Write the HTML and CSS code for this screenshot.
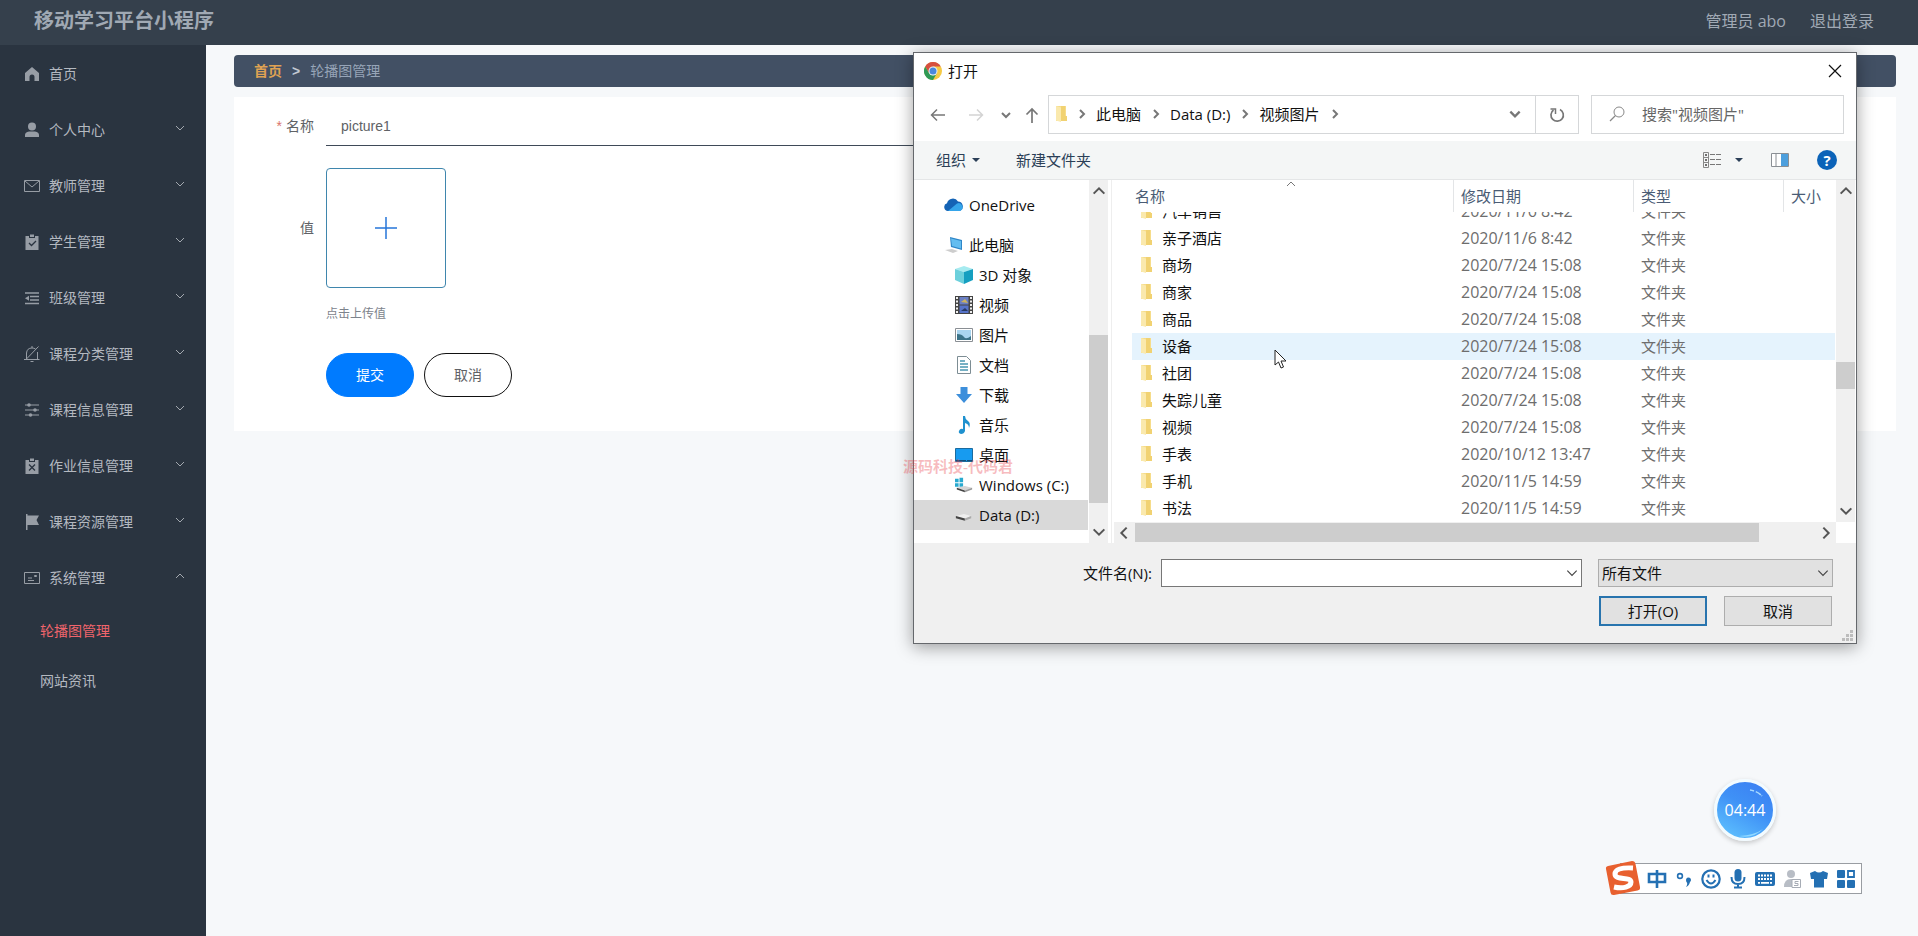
FILE: index.html
```html
<!DOCTYPE html>
<html lang="zh-CN">
<head>
<meta charset="utf-8">
<title>移动学习平台小程序</title>
<link rel="stylesheet" href="styles.css">
</head>
<body>
<svg class="sprite" aria-hidden="true">
  <symbol id="down" viewBox="0 0 12 12"><path d="M2 4l4 4 4-4" fill="none" stroke="currentColor"/></symbol>
  <symbol id="up" viewBox="0 0 12 12"><path d="M2 8l4-4 4 4" fill="none" stroke="currentColor"/></symbol>
  <symbol id="right" viewBox="0 0 12 12"><path d="M4 2l4 4-4 4" fill="none" stroke="currentColor"/></symbol>
  <symbol id="left" viewBox="0 0 12 12"><path d="M8 2L4 6l4 4" fill="none" stroke="currentColor"/></symbol>
  <symbol id="tri" viewBox="0 0 8 8"><path d="M0 2h8L4 6z" fill="currentColor"/></symbol>
  <symbol id="folder" viewBox="0 0 12 16"><path d="M1 0h10v15H1z" fill="#f6dc8a"/><path d="M6 0h4v10h2v5H6z" fill="#f1d272"/><path d="M1 0l5 1.500V16l-5-1.500z" fill="#fae9ad"/></symbol>
</svg>

<header class="topbar">
  <h1 class="brand">移动学习平台小程序</h1>
  <div class="account"><span>管理员 abo</span><a href="#">退出登录</a></div>
</header>

<div class="shell">
  <nav class="sidebar">
    <a class="menu-item" href="#"><svg class="menu-icon" viewBox="0 0 16 16"><path d="M8 1l7 6v8h-4.500v-4a2.500 2.500 0 0 0-5 0v4H1V7z" fill="currentColor"/></svg><span>首页</span></a>
    <a class="menu-item" href="#"><svg class="menu-icon" viewBox="0 0 16 16"><circle cx="8" cy="4.500" r="4" fill="currentColor"/><path d="M1 15v-2q0-3 4-3.500h6q4 .5 4 3.500v2z" fill="currentColor"/></svg><span>个人中心</span><svg class="menu-caret"><use href="#down"/></svg></a>
    <a class="menu-item" href="#"><svg class="menu-icon" viewBox="0 0 16 16"><path d="M.5 2.500h15v11H.5zM1 3l7 6 7-6" fill="none" stroke="currentColor"/></svg><span>教师管理</span><svg class="menu-caret"><use href="#down"/></svg></a>
    <a class="menu-item" href="#"><svg class="menu-icon" viewBox="0 0 16 16"><path d="M1.500 2H5v2h6V2h3.500v14h-13zM6 .5h4V3H6z" fill="currentColor"/><path d="M5 9l2.500 2.500L12 7" fill="none" stroke="#2a3440" stroke-width="1.300"/></svg><span>学生管理</span><svg class="menu-caret"><use href="#down"/></svg></a>
    <a class="menu-item" href="#"><svg class="menu-icon" viewBox="0 0 16 16"><path d="M1 3h14M6 6.500h9M6 10h9M1 13.500h14" stroke="currentColor" stroke-width="1.700"/><path d="M1 8.300l4-2.500v5z" fill="currentColor"/></svg><span>班级管理</span><svg class="menu-caret"><use href="#down"/></svg></a>
    <a class="menu-item" href="#"><svg class="menu-icon" viewBox="0 0 16 16"><path d="M0 13.500h15.500M2.500 13V7Q3 2 8 2q2 0 3.500 1M13.500 6v7M1.500 14L14.500.5M8 0v2M6.500 15.500h3" fill="none" stroke="currentColor"/></svg><span>课程分类管理</span><svg class="menu-caret"><use href="#down"/></svg></a>
    <a class="menu-item" href="#"><svg class="menu-icon" viewBox="0 0 16 16"><path d="M1 3h14M1 8h14M1 13h14" stroke="currentColor"/><g fill="currentColor"><circle cx="5" cy="3" r="1.800"/><circle cx="11" cy="8" r="1.800"/><circle cx="6.500" cy="13" r="1.800"/></g></svg><span>课程信息管理</span><svg class="menu-caret"><use href="#down"/></svg></a>
    <a class="menu-item" href="#"><svg class="menu-icon" viewBox="0 0 16 16"><path d="M1.500 2H5v2h6V2h3.500v14h-13zM6 .5h4V3H6z" fill="currentColor"/><path d="M5 6.500l6 6M11 6.500l-6 6" fill="none" stroke="#2a3440" stroke-width="1.300"/></svg><span>作业信息管理</span><svg class="menu-caret"><use href="#down"/></svg></a>
    <a class="menu-item" href="#"><svg class="menu-icon" viewBox="0 0 16 16"><path d="M2 0h1.500v1.500H15L12.500 6l2.500 5H3.500v5H2z" fill="currentColor"/></svg><span>课程资源管理</span><svg class="menu-caret"><use href="#down"/></svg></a>
    <a class="menu-item" href="#"><svg class="menu-icon" viewBox="0 0 16 16"><path d="M.5 2.500h15v11H.5zM4 8h4M4 10.500h6M10.500 5.500h2v1h-2z" fill="none" stroke="currentColor"/></svg><span>系统管理</span><svg class="menu-caret"><use href="#up"/></svg></a>
    <a class="submenu-item current" href="#">轮播图管理</a>
    <a class="submenu-item" href="#">网站资讯</a>
  </nav>

  <main class="content">
    <div class="breadcrumb"><a href="#">首页</a><span class="crumb-sep">&gt;</span><span>轮播图管理</span></div>
    <form class="card">
      <div class="field">
        <label class="field-label" for="name"><span class="required">*</span>名称</label>
        <input class="text-input" id="name" type="text" value="picture1">
      </div>
      <div class="field upload-field">
        <label class="field-label" for="upload">值</label>
        <button class="upload" id="upload" type="button" aria-label="上传"><svg viewBox="0 0 24 24" width="24" height="24"><path d="M12 1v22M1 12h22" stroke="#2676d9" stroke-width="1.500"/></svg></button>
      </div>
      <p class="hint">点击上传值</p>
      <div class="actions">
        <button class="btn primary" type="button">提交</button>
        <button class="btn" type="button">取消</button>
      </div>
    </form>
  </main>
</div>

<section class="dialog" role="dialog" aria-label="打开">
  <div class="titlebar">
    <svg width="18" height="18" viewBox="0 0 18 18"><circle cx="9" cy="9" r="9" fill="#f6ca45"/><path d="M1.200 4.500A9 9 0 0 1 16.800 4.500H9L5.100 11.300z" fill="#d7503f"/><path d="M1.200 4.500A9 9 0 0 0 9 18l3.900-6.800L9 13.500 5.100 11.300z" fill="#2f9a56"/><circle cx="9" cy="9" r="4.500" fill="#eef3f8"/><circle cx="9" cy="9" r="3.500" fill="#4a88dc"/></svg>
    <span class="window-title">打开</span>
    <button class="plain" type="button" aria-label="关闭"><svg width="14" height="14" viewBox="0 0 14 14"><path d="M1 1l12 12M13 1L1 13" stroke="#111" stroke-width="1.200"/></svg></button>
  </div>

  <div class="navbar">
    <div class="history">
      <button class="plain" type="button" aria-label="后退"><svg width="16" height="16" viewBox="0 0 16 16"><path d="M15 8H1.500M7 2.500L1.500 8 7 13.500" fill="none" stroke="#777" stroke-width="1.500"/></svg></button>
      <button class="plain" type="button" aria-label="前进"><svg width="16" height="16" viewBox="0 0 16 16"><path d="M1 8h13.500M9 2.500L14.500 8 9 13.500" fill="none" stroke="#d3d3d3" stroke-width="1.500"/></svg></button>
      <button class="plain heavy" type="button" aria-label="最近"><svg width="12" height="12"><use href="#down"/></svg></button>
      <button class="plain" type="button" aria-label="上移"><svg width="14" height="16" viewBox="0 0 14 16"><path d="M7 16V2M1.500 7.500L7 2l5.500 5.500" fill="none" stroke="#777" stroke-width="1.700"/></svg></button>
    </div>
    <div class="address">
      <svg width="12" height="16"><use href="#folder"/></svg>
      <svg class="heavy" width="12" height="12"><use href="#right"/></svg><span>此电脑</span>
      <svg class="heavy" width="12" height="12"><use href="#right"/></svg><span>Data (D:)</span>
      <svg class="heavy" width="12" height="12"><use href="#right"/></svg><span>视频图片</span>
      <svg class="heavy" width="12" height="12"><use href="#right"/></svg>
      <button class="plain heavy addr-drop" type="button" aria-label="历史"><svg width="14" height="14"><use href="#down"/></svg></button>
      <button class="plain refresh" type="button" aria-label="刷新"><svg width="16" height="16" viewBox="0 0 16 16"><path d="M11 2.500A6.200 6.200 0 1 1 4.500 3" fill="none" stroke="#777" stroke-width="1.700"/><path d="M1.500 2h5v5" fill="none" stroke="#777" stroke-width="1.500"/></svg></button>
    </div>
    <label class="search">
      <svg width="16" height="16" viewBox="0 0 16 16"><circle cx="10" cy="6" r="5" fill="none" stroke="#888"/><path d="M6.500 9.500L1 15" stroke="#888" stroke-width="1.300"/></svg>
      <input type="text" placeholder='搜索"视频图片"' aria-label="搜索">
    </label>
  </div>

  <div class="toolbar">
    <button class="plain organize" type="button">组织<svg width="8" height="8"><use href="#tri"/></svg></button>
    <button class="plain" type="button">新建文件夹</button>
    <div class="view-tools">
      <button class="plain views" type="button" aria-label="视图"><svg width="18" height="16" viewBox="0 0 18 16"><path d="M.5.5h5v15h-5zM.5 5.500h5M.5 10.500h5" fill="none" stroke="#888"/><path d="M2 3h2M2 8h2M2 13h2" stroke="#444" stroke-width="1.500"/><path d="M7 2.500h5M13 2.500h5M7 7.500h5M13 7.500h5M7 12.500h5M13 12.500h5" stroke="#777"/></svg><svg width="8" height="8"><use href="#tri"/></svg></button>
      <button class="plain" type="button" aria-label="预览窗格"><svg width="18" height="14" viewBox="0 0 18 14"><path d="M.5.500h17v13H.5zM5 .5v13" fill="#fff" stroke="#8a8f94"/><path d="M10 1h7v12h-7z" fill="#4c9fdd"/></svg></button>
      <button class="plain help" type="button" aria-label="帮助">?</button>
    </div>
  </div>

  <div class="browser">
    <ul class="tree">
      <li class="root drive"><svg width="20" height="20" viewBox="0 0 20 20"><path d="M4 16a4 4 0 0 1-1-7.800A6 6 0 0 1 14 6.500a5 5 0 0 1 2 9.500z" fill="#1463b5"/><path d="M4 16L13 8.500a4 4 0 0 1 3 7.500z" fill="#35a5ea"/></svg>OneDrive</li>
      <li class="root"><svg width="20" height="20" viewBox="0 0 20 20"><path d="M6 2l12 3v10L7 12z" fill="#2f86c8"/><path d="M7 3.500l10 2.500v7.500L8 11z" fill="#64bdf0"/><path d="M1 15l7-1 6 2-5 2z" fill="#cdcdcd"/></svg>此电脑</li>
      <li><svg width="18" height="18" viewBox="0 0 18 18"><path d="M9 0l9 3-9 3-9-3z" fill="#a6ebf0"/><path d="M0 3l9 3v12l-9-4z" fill="#6cd0dc"/><path d="M18 3L9 6v12l9-4z" fill="#159fc0"/></svg>3D 对象</li>
      <li><svg width="18" height="18" viewBox="0 0 18 18"><path d="M0 0h18v18H0z" fill="#444"/><path d="M4.500 1h9v7.500h-9z" fill="#6a7fc4"/><path d="M4.500 9.500h9V17h-9z" fill="#5673c9"/><path d="M6 6l4-3 3 4z" fill="#ccb25d"/><path d="M6 15l4-3 3 3z" fill="#273964"/><path d="M2 1v17M16 1v17" stroke="#eee" stroke-width="2" stroke-dasharray="2 1.500"/></svg>视频</li>
      <li><svg width="18" height="14" viewBox="0 0 18 14"><path d="M.5.500h17v13H.5z" fill="#fff" stroke="#8a8f94"/><path d="M2 2h14v10H2z" fill="#a9d5f0"/><path d="M2 6q5 0 7 3t7-1v4H2z" fill="#3b7389"/></svg>图片</li>
      <li><svg width="18" height="18" viewBox="0 0 18 18"><path d="M2.500.5h9l4 4v13h-13z" fill="#fff" stroke="#7d8d94"/><path d="M5 5h5M5 8h8M5 11h8M5 14h8" stroke="#4997b1" stroke-width="1.500"/></svg>文档</li>
      <li><svg width="18" height="18" viewBox="0 0 18 18"><path d="M5.500 1h7v7H17l-8 9-8-9h4.500z" fill="#3d8fdb"/></svg>下载</li>
      <li><svg width="18" height="18" viewBox="0 0 18 18"><path d="M8 0h2q0 3 3 5t1 7q0-4-4-5v8q-1 3-4 3-3-1-2-3 1-3 4-2z" fill="#1e91cf"/></svg>音乐</li>
      <li><svg width="18" height="14" viewBox="0 0 18 14"><path d="M.5.500h17v13H.5z" fill="#179bf0" stroke="#1b6b9f"/><path d="M1 12.500h16" stroke="#134f7a" stroke-dasharray="10 1"/></svg>桌面</li>
      <li><svg width="20" height="18" viewBox="0 0 20 18"><path d="M0 2h4v4H0zM5 1h4v5H5zM0 7h4v4H0zM5 7h4v4H5z" fill="#28a9cf"/><path d="M2 12l9-2 8 2-7 3z" fill="#d4d4d4"/><path d="M2 12l9 3v2l-9-3z" fill="#444"/><path d="M11 15l8-3v2l-8 3z" fill="#999"/></svg>Windows (C:)</li>
      <li class="selected"><svg width="20" height="18" viewBox="0 0 20 18"><path d="M1 10l9-2 8 2-7 3z" fill="#eee"/><path d="M1 10l10 3v2.500L1 12.500z" fill="#444"/><path d="M11 13l7-3v2.500l-7 3z" fill="#aaa"/></svg>Data (D:)</li>
    </ul>
    <div class="vscroll">
      <svg width="16" height="16"><use href="#up"/></svg>
      <div class="track"><div class="thumb tree-thumb"></div></div>
      <svg width="16" height="16"><use href="#down"/></svg>
    </div>
    <div class="files">
      <table class="file-table">
        <thead><tr><th>名称<svg class="sort" width="12" height="12"><use href="#up"/></svg></th><th>修改日期</th><th>类型</th><th>大小</th></tr></thead>
        <tbody>
          <tr><td><svg width="12" height="16"><use href="#folder"/></svg>汽车销售</td><td>2020/11/6 8:42</td><td>文件夹</td><td></td></tr>
          <tr><td><svg width="12" height="16"><use href="#folder"/></svg>亲子酒店</td><td>2020/11/6 8:42</td><td>文件夹</td><td></td></tr>
          <tr><td><svg width="12" height="16"><use href="#folder"/></svg>商场</td><td>2020/7/24 15:08</td><td>文件夹</td><td></td></tr>
          <tr><td><svg width="12" height="16"><use href="#folder"/></svg>商家</td><td>2020/7/24 15:08</td><td>文件夹</td><td></td></tr>
          <tr><td><svg width="12" height="16"><use href="#folder"/></svg>商品</td><td>2020/7/24 15:08</td><td>文件夹</td><td></td></tr>
          <tr class="hover"><td><svg width="12" height="16"><use href="#folder"/></svg>设备</td><td>2020/7/24 15:08</td><td>文件夹</td><td></td></tr>
          <tr><td><svg width="12" height="16"><use href="#folder"/></svg>社团</td><td>2020/7/24 15:08</td><td>文件夹</td><td></td></tr>
          <tr><td><svg width="12" height="16"><use href="#folder"/></svg>失踪儿童</td><td>2020/7/24 15:08</td><td>文件夹</td><td></td></tr>
          <tr><td><svg width="12" height="16"><use href="#folder"/></svg>视频</td><td>2020/7/24 15:08</td><td>文件夹</td><td></td></tr>
          <tr><td><svg width="12" height="16"><use href="#folder"/></svg>手表</td><td>2020/10/12 13:47</td><td>文件夹</td><td></td></tr>
          <tr><td><svg width="12" height="16"><use href="#folder"/></svg>手机</td><td>2020/11/5 14:59</td><td>文件夹</td><td></td></tr>
          <tr><td><svg width="12" height="16"><use href="#folder"/></svg>书法</td><td>2020/11/5 14:59</td><td>文件夹</td><td></td></tr>
        </tbody>
      </table>
      <div class="vscroll">
        <svg width="16" height="16"><use href="#up"/></svg>
        <div class="track"><div class="thumb file-thumb"></div></div>
        <svg width="16" height="16"><use href="#down"/></svg>
      </div>
      <div class="hscroll">
        <svg width="16" height="16"><use href="#left"/></svg>
        <div class="track"><div class="thumb"></div></div>
        <svg width="16" height="16"><use href="#right"/></svg>
      </div>
    </div>
  </div>

  <div class="dialog-footer">
    <label for="filename">文件名(N):</label>
    <div class="combo"><input id="filename" type="text"><svg width="14" height="14"><use href="#down"/></svg></div>
    <div class="combo filter"><select aria-label="文件类型"><option>所有文件</option></select><svg width="14" height="14"><use href="#down"/></svg></div>
    <div class="dialog-actions"><button class="win-btn default" type="button">打开(O)</button><button class="win-btn" type="button">取消</button></div>
  </div>
  <svg class="grip" width="12" height="12" viewBox="0 0 12 12"><path d="M9 0h3v3H9zM5 4h3v3H5zM9 4h3v3H9zM1 8h3v3H1zM5 8h3v3H5zM9 8h3v3H9z" fill="#bdbdbd"/></svg>
</section>

<svg class="cursor" width="13" height="20" viewBox="0 0 13 20"><path d="M1 1v15l3.500-3 2.500 6 2.500-1-2.500-6h5z" fill="#fff" stroke="#222"/></svg>
<div class="watermark">源码科技-代码君</div>

<div class="timer">04:44<svg class="timer-shine" viewBox="0 0 56 56"><path d="M22 54Q38 53 46 47 36 57 22 54z" fill="#8fd8ff"/><path d="M33 8q7 1 12 6" fill="none" stroke="#a9dcff" stroke-width="1.500" stroke-dasharray="4 2 6 1"/></svg></div>

<div class="ime">
  <svg class="ime-logo" width="36" height="36" viewBox="0 0 36 36"><path d="M3 6L27 1q3 0 3.500 3L35 27q.5 3-2.500 3.500L9 35q-3 .5-3.500-2.500L1 9q-.5-2.500 2-3z" fill="#e8602f"/><path d="M28 8Q10 7 10 14c0 7 16 2 16 8 0 5-8 7-17 5" fill="none" stroke="#fff" stroke-width="5"/></svg>
  <svg width="20" height="20" viewBox="0 0 20 20"><path d="M2 5h16v8H2zM10 1v18" fill="none" stroke="#2470b3" stroke-width="2.600"/></svg>
  <svg width="20" height="20" viewBox="0 0 20 20"><circle cx="6" cy="7" r="2.400" fill="none" stroke="#2470b3" stroke-width="1.600"/><path d="M12 11a2.500 2.500 0 1 1 4 2q-1 4-4 5 1.500-2 1.200-4-1.200-1-1.200-3z" fill="#2470b3"/></svg>
  <svg width="20" height="20" viewBox="0 0 20 20"><circle cx="10" cy="10" r="8.700" fill="none" stroke="#2470b3" stroke-width="2.200"/><path d="M7.500 5.500v3M12.500 5.500v3M5.500 11q4.500 7 9 0" fill="none" stroke="#2470b3" stroke-width="2"/></svg>
  <svg width="20" height="20" viewBox="0 0 20 20"><rect x="6.500" y="0" width="7" height="12.500" rx="3.500" fill="#2470b3"/><path d="M3.500 8q0 7 6.500 7t6.500-7M10 15v3.500M6 18.500h8" fill="none" stroke="#2470b3" stroke-width="2"/></svg>
  <svg width="20" height="20" viewBox="0 0 20 20"><rect x="0" y="3" width="20" height="14" rx="2" fill="#2470b3"/><path d="M3 6.500h14M3 10h14" stroke="#fff" stroke-width="2" stroke-dasharray="2 1"/><path d="M3 13.800h2M6 13.800h8M15 13.800h2" stroke="#fff" stroke-width="1.700"/></svg>
  <svg width="20" height="20" viewBox="0 0 20 20"><circle cx="9" cy="5" r="4" fill="#b8bdc5"/><path d="M2 18q0-8 7-8h2v8z" fill="#b8bdc5"/><path d="M10 10.500h8.500v8H10zM16.500 12.500H13v2h3v2h-4" fill="#fff" stroke="#a7acb5"/></svg>
  <svg width="20" height="20" viewBox="0 0 20 20"><path d="M6 2q4 3 8 0l5 2-1 6h-3v8.500H5V10H2L1 4z" fill="#2470b3"/></svg>
  <svg width="20" height="20" viewBox="0 0 20 20"><rect x="1" y="1" width="8" height="8" rx="1" fill="#2470b3"/><rect x="1" y="11" width="8" height="8" rx="1" fill="#2470b3"/><rect x="11" y="11" width="8" height="8" rx="1" fill="#2470b3"/><path d="M12 2h6v6h-6z" fill="none" stroke="#2470b3" stroke-width="1.800"/></svg>
</div>
</body>
</html>
```

FILE: styles.css
```css
* { box-sizing: border-box; }

body {
  margin: 0;
  min-height: 100vh;
  display: flex;
  flex-direction: column;
  background: #f6f8fa;
  color: #606266;
  font: 14px/20px "Liberation Sans", "Noto Sans CJK SC", sans-serif;
}

a { color: inherit; text-decoration: none; }
button, input, select { font: inherit; color: inherit; }
svg { flex: none; }
.sprite { position: absolute; width: 0; height: 0; }

/* Header and side menu */
.topbar {
  display: flex;
  align-items: center;
  justify-content: space-between;
  height: 45px;
  padding: 0 44px 3px 34px;
  background: #35404c;
  color: #a0a9b4;
}
.brand { margin: 0; font-size: 20px; line-height: 28px; font-weight: 700; }
.account {
  display: flex;
  gap: 24px;
  font: 16px/24px "Open Sans", "Noto Sans CJK SC", sans-serif;
}
.shell { flex: 1; display: flex; }
.sidebar {
  width: 206px;
  flex: none;
  padding-top: 1px;
  background: #2a3440;
  color: #b4b9c0;
}
.menu-item {
  display: flex;
  align-items: center;
  height: 56px;
  padding: 0 20px 0 24px;
}
.menu-icon { width: 16px; height: 16px; margin-right: 9px; color: #979da5; }
.menu-caret { width: 12px; height: 12px; margin: 0 0 4px auto; color: #a3a9b0; }
.submenu-item { display: block; padding: 15px 0 15px 40px; }
.submenu-item.current { color: #f0656c; }

/* Page content */
.content { flex: 1; min-width: 0; padding: 10px 22px 10px 28px; }
.breadcrumb {
  display: flex;
  gap: 10px;
  padding: 6px 20px;
  border-radius: 4px;
  background: #425064;
  color: #97a5b8;
}
.breadcrumb a { color: #dfa253; font-weight: 700; }
.crumb-sep { color: #c3cad3; font-weight: 700; }
.card { margin: 10px 0 0; padding: 9px 60px 34px 12px; background: #fff; }
.field { display: grid; grid-template-columns: 80px 1fr; align-items: center; }
.field-label { padding-right: 12px; text-align: right; }
.required { margin-right: 4px; color: #d9756b; }
.text-input {
  width: 100%;
  height: 40px;
  padding: 0 15px;
  border: 0;
  border-bottom: 1px solid #3f4a58;
  background: transparent;
}
.upload-field { margin-top: 22px; }
.upload {
  display: grid;
  place-items: center;
  width: 120px;
  height: 120px;
  padding: 0;
  border: 1px solid #3f86ad;
  border-radius: 4px;
  background: #fff;
}
.hint { margin: 16px 0 29px 80px; font-size: 12px; line-height: 20px; color: #7d838c; }
.actions { display: flex; gap: 10px; margin-left: 80px; }
.btn {
  width: 88px;
  height: 44px;
  border: 1px solid #111;
  border-radius: 22px;
  background: #fff;
}
.btn.primary { border-color: #007bff; background: #007bff; color: #fff; }

/* File picker window */
.dialog {
  position: absolute;
  left: 913px;
  top: 52px;
  width: 944px;
  border: 1px solid #65686c;
  background: #fff;
  color: #111;
  box-shadow: 0 3px 16px rgba(0, 0, 0, .38);
  font: 15px/20px "Open Sans", "Noto Sans CJK SC", sans-serif;
}
.plain {
  display: inline-flex;
  align-items: center;
  justify-content: center;
  padding: 0;
  border: 0;
  background: none;
}
.titlebar { display: flex; align-items: center; gap: 6px; padding: 8px 14px 14px 10px; }
.window-title { flex: 1; }
.navbar { display: flex; align-items: center; height: 39px; padding-right: 12px; }
.history { display: grid; grid-template-columns: 38px 38px 22px 30px; padding: 0 1px 0 5px; }
.heavy { color: #777; stroke-width: 2; }
.address {
  flex: 1;
  display: flex;
  align-items: center;
  gap: 8px;
  height: 39px;
  padding: 0 0 2px 6px;
  border: 1px solid #d5d7d9;
}
.address > .heavy { margin-left: 1px; }
.address > .addr-drop { margin-left: auto; margin-right: 5px; }
.refresh { align-self: stretch; width: 43px; margin-bottom: -2px; border-left: 1px solid #d5d7d9; }
.search {
  display: flex;
  align-items: center;
  gap: 17px;
  width: 253px;
  height: 39px;
  margin-left: 12px;
  padding: 0 0 2px 17px;
  border: 1px solid #d5d7d9;
}
.search input { flex: 1; min-width: 0; padding: 0; border: 0; outline: 0; }
.search input::placeholder { color: #666; opacity: 1; }
.toolbar {
  display: flex;
  align-items: center;
  gap: 36px;
  height: 39px;
  margin-top: 7px;
  padding: 0 19px 0 22px;
  border-bottom: 1px solid #e4e6e7;
  background: #f4f6f6;
  color: #2b3f57;
}
.organize { gap: 6px; }
.view-tools { display: flex; align-items: center; gap: 28px; margin-left: auto; }
.views { gap: 14px; }
.help {
  width: 20px;
  height: 20px;
  border-radius: 50%;
  background: #0b63b8;
  color: #fff;
  font-weight: 700;
}

.browser { display: flex; height: 363px; }
.tree { width: 175px; flex: none; margin: 0; padding: 10px 1px 0 0; list-style: none; }
.tree li { display: flex; align-items: center; gap: 6px; height: 30px; padding-left: 41px; white-space: nowrap; }
.tree li svg { width: 18px; }
.tree .root { gap: 5px; padding-left: 30px; }
.tree .root svg { width: 20px; }
.tree .drive { margin-bottom: 10px; }
.tree .selected { background: #d9d9d9; }
.vscroll {
  display: flex;
  flex-direction: column;
  align-items: center;
  justify-content: space-between;
  width: 19px;
  flex: none;
  padding: 3px 0;
  background: #f0f0f0;
  color: #555;
}
.vscroll > svg, .hscroll > svg { stroke-width: 1.5; }
.vscroll .track { flex: 1; width: 100%; }
.thumb { background: #cdcdcd; }
.tree-thumb { height: 168px; margin-top: 136px; }
.file-thumb { height: 27px; margin-top: 163px; }
.files {
  flex: 1;
  display: grid;
  grid-template: 342px 21px / 1fr 20px;
  margin-left: 3px;
  padding-left: 2px;
  border-left: 1px solid #eee;
}
.file-table { display: flex; flex-direction: column; min-width: 0; overflow: hidden; }
.file-table tr { display: grid; grid-template-columns: 321px 180px 150px 1fr; margin: 0 1px 0 18px; }
.file-table th, .file-table td { padding: 0; text-align: left; font-weight: 400; }
.file-table thead { display: block; color: #4a5c75; }
.file-table th { position: relative; height: 32px; padding: 6px 0 0 7px; border-left: 1px solid #e3e5e7; line-height: 20px; }
.file-table th:first-child { padding-left: 2px; border-color: transparent; }
.sort { position: absolute; left: 152px; top: -2px; color: #777; }
.file-table tbody { flex: 1; display: flex; flex-direction: column; justify-content: flex-end; overflow: hidden; }
.file-table td { height: 27px; padding: 3px 0 4px 8px; color: #6d6d6d; }
.file-table td:nth-child(2) { font-size: 16px; }
.file-table td:first-child { display: flex; align-items: center; gap: 10px; padding-left: 8px; color: #111; }
.file-table .hover { background: #e5f3fd; }
.hscroll { display: flex; align-items: center; padding: 0 2px; background: #f0f0f0; color: #555; }
.hscroll .track { flex: 1; }
.hscroll .thumb { width: 91%; height: 19px; margin-left: 3px; }

.dialog-footer {
  display: grid;
  grid-template-columns: 1fr 421px 235px;
  column-gap: 16px;
  row-gap: 9px;
  align-items: center;
  padding: 16px 23px 17px 0;
  background: #f0f0f0;
}
.dialog-footer > label { margin-right: -7px; text-align: right; }
.combo { display: grid; align-items: center; }
.combo > * { grid-area: 1 / 1; }
.combo > svg { justify-self: end; margin-right: 3px; color: #444; pointer-events: none; }
.combo input, .combo select {
  width: 100%;
  height: 28px;
  padding: 0 3px;
  border: 1px solid #777;
  border-radius: 0;
  background: #fff;
  appearance: none;
}
.combo select { border-color: #adadad; background: #e1e1e1; }
.dialog-actions { grid-column: 3; display: flex; gap: 17px; padding-left: 1px; }
.win-btn { width: 108px; height: 30px; padding: 0; border: 1px solid #adadad; background: #e1e1e1; }
.win-btn.default { border: 2px solid #2874ae; }
.grip { position: absolute; right: 3px; bottom: 1px; }

/* Desktop overlays */
.cursor { position: absolute; left: 1274px; top: 349px; }
.watermark {
  position: absolute;
  left: 903px;
  top: 457px;
  color: rgba(232, 60, 70, .34);
  font: 700 15px/20px "Liberation Serif", "Noto Sans CJK SC", serif;
}
.timer {
  position: absolute;
  left: 1714px;
  top: 779px;
  display: grid;
  place-items: center;
  width: 62px;
  height: 62px;
  border: 3px solid #f2fbff;
  border-radius: 50%;
  background: linear-gradient(30deg, #62c7ff, #3f91f6 55%, #3a7df2);
  box-shadow: 0 2px 5px rgba(0, 0, 0, .2);
  color: #fff;
  font: 16px/20px "Open Sans", sans-serif;
}
.timer-shine { position: absolute; inset: 0; }
.ime {
  position: absolute;
  left: 1620px;
  top: 863px;
  display: flex;
  align-items: center;
  gap: 7px;
  width: 242px;
  height: 31px;
  border: 1px solid #999da2;
  background: #fff;
}
.ime-logo { margin: -2px -1px 0 -16px; }
```
